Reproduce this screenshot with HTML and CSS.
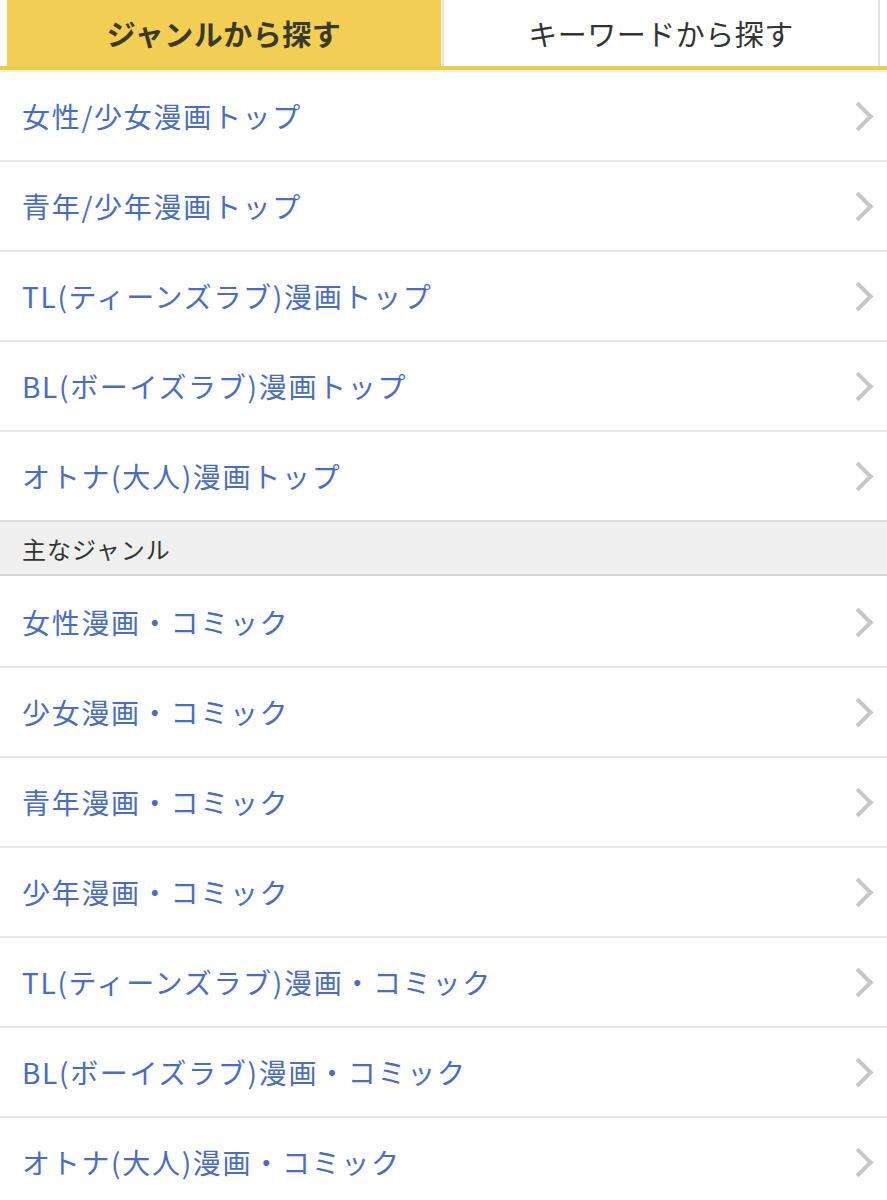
FILE: index.html
```html
<!DOCTYPE html>
<html lang="ja">
<head>
    <meta charset="UTF-8">
    <meta name="viewport" content="width=device-width, initial-scale=1.0">
    <title>ジャンルから探す</title>
    <link rel="stylesheet" href="styles.css">
</head>
<body>
    <div class="tabs">
        <div class="tab active">ジャンルから探す</div>
        <div class="tab">キーワードから探す</div>
    </div>

    <ul class="menu">
        <li><a href="#">女性/少女漫画トップ<span class="chev"></span></a></li>
        <li><a href="#">青年/少年漫画トップ<span class="chev"></span></a></li>
        <li><a href="#">TL(ティーンズラブ)漫画トップ<span class="chev"></span></a></li>
        <li><a href="#">BL(ボーイズラブ)漫画トップ<span class="chev"></span></a></li>
        <li><a href="#">オトナ(大人)漫画トップ<span class="chev"></span></a></li>
    </ul>

    <div class="section-title">主なジャンル</div>

    <ul class="menu">
        <li><a href="#">女性漫画・コミック<span class="chev"></span></a></li>
        <li><a href="#">少女漫画・コミック<span class="chev"></span></a></li>
        <li><a href="#">青年漫画・コミック<span class="chev"></span></a></li>
        <li><a href="#">少年漫画・コミック<span class="chev"></span></a></li>
        <li><a href="#">TL(ティーンズラブ)漫画・コミック<span class="chev"></span></a></li>
        <li><a href="#">BL(ボーイズラブ)漫画・コミック<span class="chev"></span></a></li>
        <li><a href="#">オトナ(大人)漫画・コミック<span class="chev"></span></a></li>
    </ul>
</body>
</html>
```

FILE: styles.css
```css
body {
    font-family: "Noto Sans CJK JP", "Noto Sans", sans-serif;
    margin: 0;
    background-color: #ffffff;
}

.tabs {
    display: flex;
    padding: 0 7px;
    border-bottom: 4px solid #ebca55;
    box-shadow: 0 2px 0 #faf0cc;
}

.tab {
    flex: 1;
    height: 66px;
    display: flex;
    align-items: center;
    justify-content: center;
    font-size: 29px;
    letter-spacing: 0.5px;
    color: #333333;
    background-color: #ffffff;
    border-left: 2px solid #e2e2e2;
    border-right: 2px solid #e2e2e2;
}

.tab.active {
    background-color: #f2cf52;
    border: none;
    font-weight: bold;
    color: #3a3a2a;
    margin-right: 1px;
}

.menu {
    list-style: none;
    margin: 0;
    padding: 0;
    margin-top: 2px;
}

.menu li {
    border-bottom: 2px solid #e8e8e8;
}

.menu li:last-child {
    border-bottom: none;
}

.menu a {
    display: flex;
    align-items: center;
    justify-content: space-between;
    height: 88px;
    padding: 0 18px 0 22px;
    font-size: 28px;
    letter-spacing: 1.7px;
    color: #4a6cc2;
    text-decoration: none;
}

.chev {
    width: 17px;
    height: 17px;
    border-top: 4px solid #c6c6c6;
    border-right: 4px solid #c6c6c6;
    transform: rotate(45deg);
}

.section-title {
    height: 52px;
    display: flex;
    align-items: center;
    padding-left: 22px;
    font-size: 24px;
    letter-spacing: 1px;
    color: #333333;
    background-color: #efefef;
    border-top: 2px solid #dddddd;
    border-bottom: 2px solid #d6d6d6;
}
```
